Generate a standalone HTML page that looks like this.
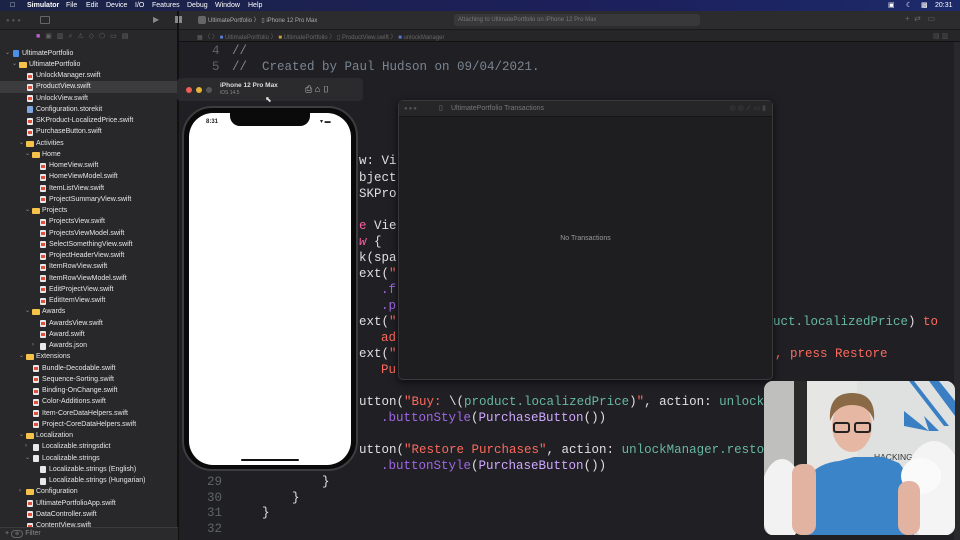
<!DOCTYPE html>
<html><head><meta charset="utf-8"><style>
*{margin:0;padding:0;box-sizing:border-box}
body{width:960px;height:540px;overflow:hidden;background:#1f1f24;font-family:"Liberation Sans",sans-serif;position:relative;color:#ddd}
.a{position:absolute}
.menu{left:0;top:0;width:960px;height:11px;background:linear-gradient(90deg,#1b2446,#1c1f5a 60%,#1d2a6a);font-size:7px;color:#fff;line-height:11px}
.menu span{position:absolute;top:0}
.side{left:0;top:11px;width:178px;height:529px;background:#28282a;border-right:1px solid #111}
.row{position:absolute;left:0;width:177px;height:11.25px;font-size:7px;line-height:11.25px;color:#e6e6e6;white-space:nowrap}
.ic{position:absolute;top:2.5px;width:6px;height:7px;background:#e8e8e8;border-radius:1px}
.ic.s:after{content:"";position:absolute;left:1px;top:2px;width:4px;height:3px;background:#e2513c}
.fd{position:absolute;top:3px;width:8px;height:6px;background:#f5c34a;border-radius:1px}
.ch{position:absolute;top:0;font-size:6px;color:#999}
.code{font-family:"Liberation Mono",monospace;font-size:12.5px;white-space:pre;line-height:16px;color:#e0e0e0}
.s{color:#fc6a5d}.t{color:#67b7a4}.p{color:#a167e6}.ty{color:#d0a8ff}.k{color:#fc5fa3}.c{color:#7b8591}.n{color:#5f636a}
</style></head><body>
<div class="a menu">
<span style="left:10px">&#63743;</span>
<span style="left:27px;font-weight:bold">Simulator</span>
<span style="left:66px">File</span><span style="left:86px">Edit</span><span style="left:106px">Device</span><span style="left:135px">I/O</span><span style="left:152px">Features</span><span style="left:187px">Debug</span><span style="left:215px">Window</span><span style="left:248px">Help</span>
<span style="left:888px">&#9635;</span><span style="left:906px">&#9790;</span><span style="left:921px">&#9641;</span><span style="left:935px">20:31</span>
</div>
<div class="a" style="left:178px;top:11px;width:782px;height:19px;background:#2c2c2e;border-bottom:1px solid #1a1a1a"></div>
<div class="a" style="left:178px;top:30px;width:782px;height:12px;background:#262628;border-bottom:1px solid #111"></div>
<div class="a" style="left:198px;top:16px;width:8px;height:8px;background:#666;border-radius:2px"></div>
<div class="a" style="left:208px;top:15px;font-size:6px;color:#aaa">UltimatePortfolio 〉 ▯ iPhone 12 Pro Max</div>
<div class="a" style="left:454px;top:14px;width:246px;height:12px;background:#38383a;border-radius:3px;font-size:6px;color:#777;line-height:12px;padding-left:4px">Attaching to UltimatePortfolio on iPhone 12 Pro Max</div>
<div class="a" style="left:905px;top:14px;font-size:8px;color:#666">+ &nbsp;⇄ &nbsp;&nbsp;▭</div>
<div class="a" style="left:197px;top:32px;font-size:6px;color:#666">▦ 〈 〉 <span style="color:#5a7bd0">■</span> UltimatePortfolio 〉 <span style="color:#c9a23a">■</span> UltimatePortfolio 〉 ▯ ProductView.swift 〉 <span style="color:#5a7bd0">■</span> unlockManager</div>
<div class="a" style="left:933px;top:32px;font-size:7px;color:#555">▤ ▥</div>
<div class="a" style="left:954px;top:42px;width:6px;height:498px;background:#29292b"></div>

<div class="a side">
<div class="a" style="left:6px;top:7px;font-size:6px;color:#555;letter-spacing:2px">●●●</div>
<div class="a" style="left:40px;top:5px;width:10px;height:8px;border:1px solid #666;border-radius:1px"></div>
<div class="a" style="left:153px;top:4px;font-size:8px;color:#888">▶</div>
<div class="a" style="left:175px;top:5px;width:7px;height:7px;background:#888"></div>
<div class="a" style="left:36px;top:21px;font-size:7px;color:#666;letter-spacing:5px"><span style="color:#b560c8">■</span>▣▥⌕⚠◇⬡▭▤</div>
</div>
<div class="a" style="left:0;top:29px;width:178px;height:1px;background:#1a1a1a"></div>
<div class="a" style="left:178px;top:11px;width:1px;height:529px;background:#111"></div>

<div id="tree"></div>
<div class="a" style="left:0;top:527px;width:178px;height:13px;background:#2a2a2c;border-top:1px solid #3a3a3a;font-size:7px;color:#888;line-height:12px;padding-left:5px">+ <span style="border:1px solid #666;border-radius:6px;padding:0 3px;font-size:5px">⊜</span> Filter</div>

<div class="a code" style="left:0;top:0">
<div class="a n" style="left:212px;top:43px">4</div><div class="a c" style="left:232px;top:43px">//</div>
<div class="a n" style="left:212px;top:59px">5</div><div class="a c" style="left:232px;top:59px">//  Created by Paul Hudson on 09/04/2021.</div>
<div class="a" style="left:359px;top:153px">w: Vi</div>
<div class="a" style="left:359px;top:170px">bject</div>
<div class="a" style="left:359px;top:186px">SKPro</div>
<div class="a" style="left:359px;top:218px"><span class="k">e</span> Vie</div>
<div class="a" style="left:359px;top:234px"><span class="k"><i>w</i></span> {</div>
<div class="a" style="left:359px;top:250px">k(spa</div>
<div class="a" style="left:359px;top:266px">ext(<span class="s">"</span></div>
<div class="a p" style="left:381px;top:282px">.f</div>
<div class="a p" style="left:381px;top:298px">.p</div>
<div class="a" style="left:359px;top:314px">ext(<span class="s">"</span></div>
<div class="a s" style="left:381px;top:330px">ad</div>
<div class="a" style="left:359px;top:346px">ext(<span class="s">"</span></div>
<div class="a s" style="left:381px;top:362px">Pu</div>
<div class="a" style="left:773px;top:314px"><span class="t">uct.localizedPrice</span>) <span class="s">to</span></div>
<div class="a s" style="left:775px;top:346px">, press Restore</div>
<div class="a" style="left:359px;top:394px">utton(<span class="s">"Buy: </span>\(<span class="t">product.localizedPrice</span>)<span class="s">"</span>, action: <span class="t">unlock</span></div>
<div class="a" style="left:381px;top:410px"><span class="p">.buttonStyle</span>(<span class="ty">PurchaseButton</span>())</div>
<div class="a" style="left:359px;top:442px">utton(<span class="s">"Restore Purchases"</span>, action: <span class="t">unlockManager.resto</span></div>
<div class="a" style="left:381px;top:458px"><span class="p">.buttonStyle</span>(<span class="ty">PurchaseButton</span>())</div>
<div class="a n" style="left:207px;top:474px">29</div><div class="a" style="left:322px;top:474px">}</div>
<div class="a n" style="left:207px;top:490px">30</div><div class="a" style="left:292px;top:490px">}</div>
<div class="a n" style="left:207px;top:505px">31</div><div class="a" style="left:262px;top:505px">}</div>
<div class="a n" style="left:207px;top:521px">32</div>
</div>

<div class="a" style="left:398px;top:100px;width:375px;height:280px;background:#1e1e21;border:1px solid #3a3a3c;border-radius:5px;box-shadow:0 2px 8px rgba(0,0,0,.6)">
<div style="height:16px;background:#262628;border-bottom:1px solid #151515;font-size:7px;color:#777;line-height:16px;position:relative">
<span style="position:absolute;left:5px;font-size:6px;color:#555;letter-spacing:1px">●●●</span>
<span style="position:absolute;left:40px">▯</span>
<span style="position:absolute;left:52px">UltimatePortfolio Transactions</span>
<span style="position:absolute;right:6px;color:#444">◎ ◎ ✓ ▭ ▮</span></div>
<div style="position:absolute;left:0;width:100%;top:134px;text-align:center;font-size:7px;color:#999">No Transactions</div>
</div>

<div class="a" style="left:177px;top:78px;width:186px;height:23px;background:#2b2b2d;border-radius:4px">
<div class="a" style="left:9px;top:9px;width:6px;height:6px;border-radius:50%;background:#ed5e55"></div>
<div class="a" style="left:19px;top:9px;width:6px;height:6px;border-radius:50%;background:#e8b33a"></div>
<div class="a" style="left:29px;top:9px;width:6px;height:6px;border-radius:50%;background:#555"></div>
<div class="a" style="left:43px;top:4px;font-size:6.5px;font-weight:bold;color:#ddd">iPhone 12 Pro Max</div>
<div class="a" style="left:43px;top:12px;font-size:5px;color:#888">iOS 14.5</div>
<div class="a" style="left:128px;top:6px;font-size:9px;color:#bbb">⎙ ⌂ ▯</div>
</div>
<div class="a" style="left:265px;top:95px;font-size:8px;color:#ddd">⬉</div>
<div class="a" style="left:182px;top:106px;width:176px;height:365px;background:#0a0a0a;border:2px solid #3d3d40;border-radius:30px"></div>
<div class="a" style="left:189px;top:113px;width:162px;height:352px;background:#fff;border-radius:24px"></div>
<div class="a" style="left:230px;top:112px;width:80px;height:14px;background:#0a0a0a;border-radius:0 0 10px 10px"></div>
<div class="a" style="left:206px;top:119px;font-size:6px;font-weight:bold;color:#222">8:31</div>
<div class="a" style="left:320px;top:118px;font-size:6px;color:#222">▾ ▬</div>
<div class="a" style="left:241px;top:459px;width:58px;height:2px;background:#111;border-radius:1px"></div>

<svg class="a" style="left:764px;top:381px" width="191" height="154" viewBox="0 0 191 154">
<defs><clipPath id="r"><rect width="191" height="154" rx="9"/></clipPath></defs>
<g clip-path="url(#r)">
<rect width="191" height="154" fill="#d6d6d4"/>
<rect width="30" height="154" fill="#bfbfbd"/>
<rect x="30" width="13" height="154" fill="#2a2a2a"/>
<rect x="43" width="50" height="154" fill="#e6e6e4"/>
<rect x="93" width="98" height="154" fill="#dfe0e0"/>
<path d="M165 0 L191 35 L191 20 L175 0Z M150 0 L185 45 L180 45 L145 0Z M140 30 L165 50 L140 45Z M160 35 L175 50 L165 50Z" fill="#3a7fc4"/>
<text x="110" y="79" font-size="8.5" fill="#333" font-family="Liberation Sans">HACKING WITH</text>
<path d="M40 154 L45 95 Q55 82 75 80 L90 76 L120 76 L135 82 L145 95 L150 154Z" fill="#3c84c8"/>
<ellipse cx="88" cy="45" rx="20" ry="26" fill="#e6b8a4"/>
<path d="M66 40 Q64 12 88 12 Q112 12 110 40 Q105 24 88 24 Q72 24 66 40Z" fill="#8a6a46"/>
<rect x="70" y="42" width="15" height="9" rx="2" fill="none" stroke="#222" stroke-width="2"/>
<rect x="91" y="42" width="15" height="9" rx="2" fill="none" stroke="#222" stroke-width="2"/>
<ellipse cx="18" cy="120" rx="22" ry="42" fill="#f2f2f2"/>
<ellipse cx="170" cy="110" rx="30" ry="50" fill="#f4f4f4"/>
<ellipse cx="157" cy="95" rx="20" ry="18" fill="#fafafa"/>
<rect x="28" y="83" width="24" height="71" rx="10" fill="#e2b3a0"/>
<rect x="134" y="100" width="22" height="54" rx="10" fill="#e2b3a0"/>
</g></svg>

<script>
const rows=[
[0,'p','UltimatePortfolio','v'],[1,'f','UltimatePortfolio','v'],[2,'s','UnlockManager.swift'],[2,'s','ProductView.swift',0,1],[2,'s','UnlockView.swift'],[2,'b','Configuration.storekit'],[2,'s','SKProduct-LocalizedPrice.swift'],[2,'s','PurchaseButton.swift'],
[2,'f','Activities','v'],[3,'f','Home','v'],[4,'s','HomeView.swift'],[4,'s','HomeViewModel.swift'],[4,'s','ItemListView.swift'],[4,'s','ProjectSummaryView.swift'],
[3,'f','Projects','v'],[4,'s','ProjectsView.swift'],[4,'s','ProjectsViewModel.swift'],[4,'s','SelectSomethingView.swift'],[4,'s','ProjectHeaderView.swift'],[4,'s','ItemRowView.swift'],[4,'s','ItemRowViewModel.swift'],[4,'s','EditProjectView.swift'],[4,'s','EditItemView.swift'],
[3,'f','Awards','v'],[4,'s','AwardsView.swift'],[4,'s','Award.swift'],[4,'w','Awards.json','>'],
[2,'f','Extensions','v'],[3,'s','Bundle-Decodable.swift'],[3,'s','Sequence-Sorting.swift'],[3,'s','Binding-OnChange.swift'],[3,'s','Color-Additions.swift'],[3,'s','Item-CoreDataHelpers.swift'],[3,'s','Project-CoreDataHelpers.swift'],
[2,'f','Localization','v'],[3,'w','Localizable.stringsdict','>'],[3,'w','Localizable.strings','v'],[4,'w','Localizable.strings (English)'],[4,'w','Localizable.strings (Hungarian)'],
[2,'f','Configuration','>'],[2,'s','UltimatePortfolioApp.swift'],[2,'s','DataController.swift'],[2,'s','ContentView.swift']];
const tx=[22,29,36,42,49];let h='';
rows.forEach((r,i)=>{const [l,t,n,c,sel]=r;const y=47.5+i*11.25;const x=tx[l];
let ic=t=='f'?`<div class="fd" style="left:${x-10}px"></div>`:t=='p'?`<div class="ic" style="left:${x-9}px;background:#4a8fe8"></div>`:t=='b'?`<div class="ic" style="left:${x-9}px;background:#7fa8e0"></div>`:`<div class="ic ${t=='s'?'s':''}" style="left:${x-9}px"></div>`;
let ch=c?`<span class="ch" style="left:${x-17}px">${c=='v'?'⌄':'›'}</span>`:'';
h+=`<div class="row" style="top:${y}px;${sel?'background:#3c3c3f;':''}">${ch}${ic}<span style="position:absolute;left:${x}px">${n}</span></div>`;});
document.getElementById('tree').innerHTML=h;
</script>
</body></html>
